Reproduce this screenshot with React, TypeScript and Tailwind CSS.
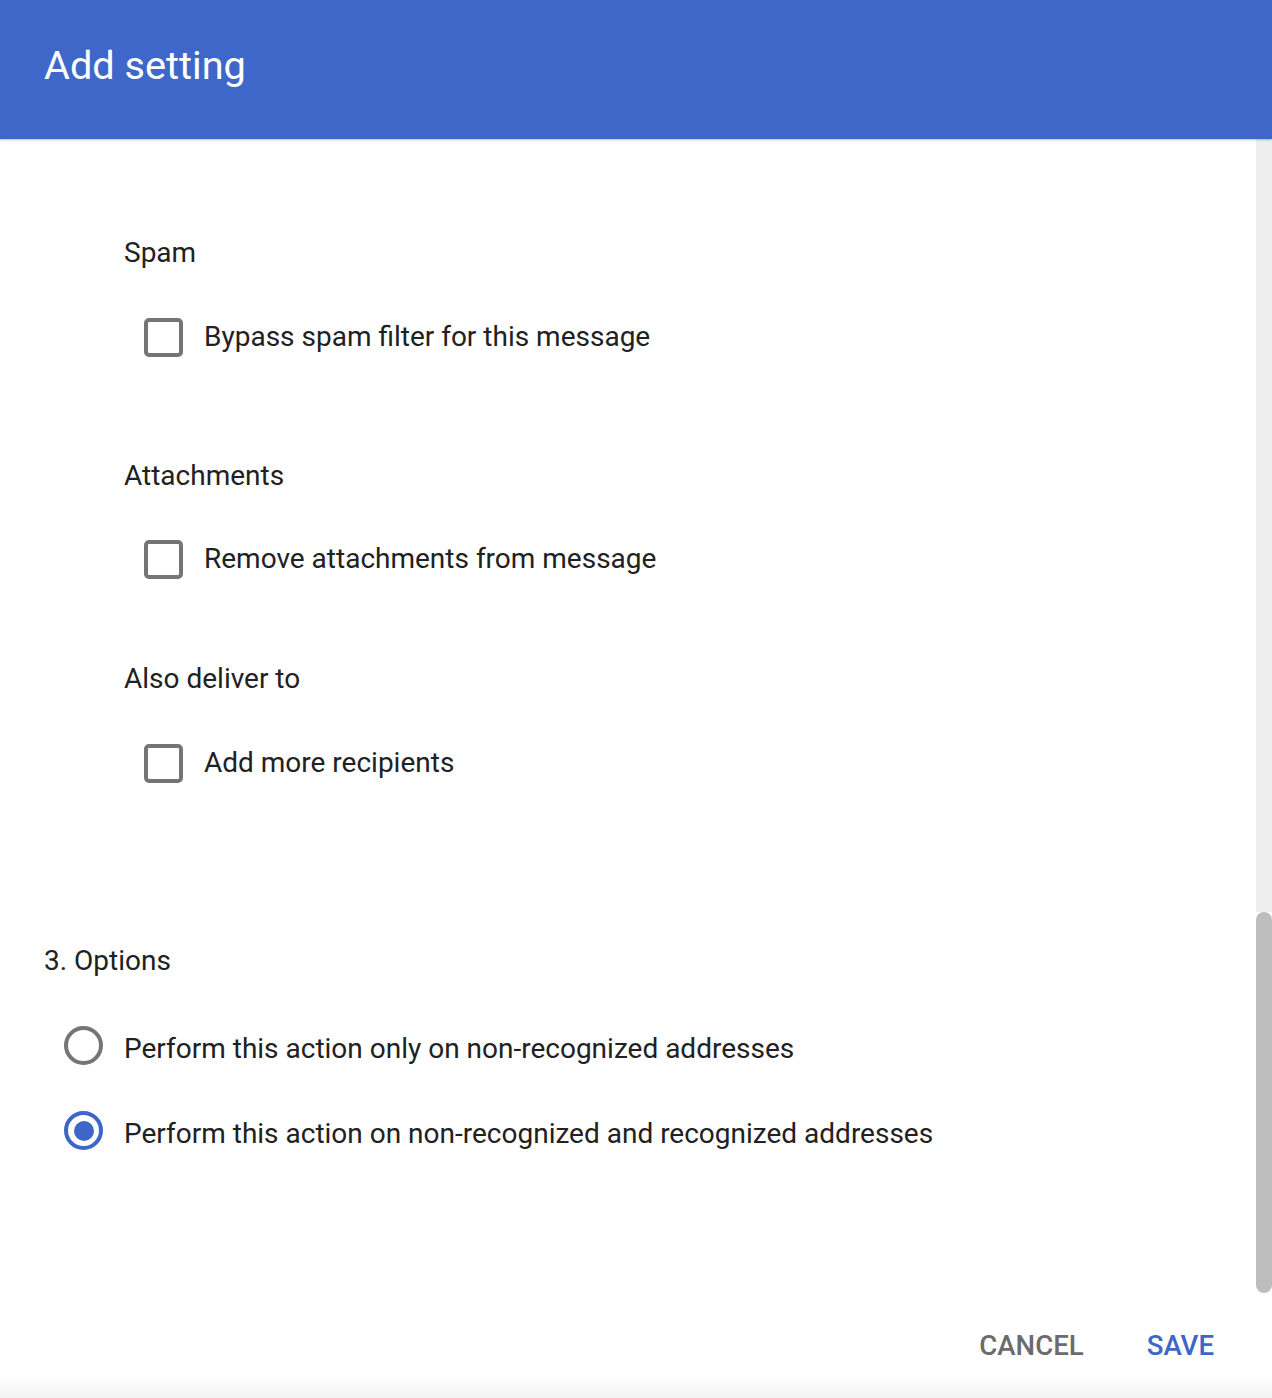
import React from "react";

function Checkbox() {
  return <div className="w-[39px] h-[39px] shrink-0 rounded-[5px] border-[4px] border-[#757575] bg-white" />;
}

function Radio({ checked }: { checked?: boolean }) {
  return checked ? (
    <div className="w-[39px] h-[39px] mb-[7px] shrink-0 rounded-full border-[4px] border-[#3d66c8] flex items-center justify-center">
      <div className="w-[20px] h-[20px] rounded-full bg-[#3d66c8]" />
    </div>
  ) : (
    <div className="w-[39px] h-[39px] mb-[7px] shrink-0 rounded-full border-[4px] border-[#757575]" />
  );
}

function Row({ className, children }: { className?: string; children: React.ReactNode }) {
  return <div className={"h-[40px] flex items-center " + (className ?? "")}>{children}</div>;
}

export default function App() {
  return (
    <div
      className="w-[1272px] h-[1398px] flex flex-col bg-white text-[#212121] overflow-hidden"
      style={{ fontFamily: "Roboto, 'Noto Sans', sans-serif" }}
    >
      <header className="h-[139px] shrink-0 bg-[#3f67c9] flex items-center pl-[44px] pb-[7px] shadow-[0_1px_2px_rgba(0,0,0,0.25)] relative z-10">
        <h1 className="text-[39.7px] text-white font-normal leading-none">Add setting</h1>
      </header>

      <div className="flex-1 flex min-h-0">
        <main className="flex-1 pt-[94px] text-[28px] leading-[40px]">
          <div className="pl-[124px]">
            <Row>Spam</Row>
            <Row className="mt-[44px] pl-[20px] gap-[21px]">
              <Checkbox />
              <span>Bypass spam filter for this message</span>
            </Row>
            <Row className="mt-[99px]">Attachments</Row>
            <Row className="mt-[43px] pl-[20px] gap-[21px]">
              <Checkbox />
              <span>Remove attachments from message</span>
            </Row>
            <Row className="mt-[80px]">Also deliver to</Row>
            <Row className="mt-[44px] pl-[20px] gap-[21px]">
              <Checkbox />
              <span>Add more recipients</span>
            </Row>
          </div>
          <div className="pl-[44px]">
            <Row className="mt-[158px]">3. Options</Row>
            <Row className="mt-[48px] pl-[20px] gap-[21px]">
              <Radio />
              <span>Perform this action only on non-recognized addresses</span>
            </Row>
            <Row className="mt-[45px] pl-[20px] gap-[21px]">
              <Radio checked />
              <span>Perform this action on non-recognized and recognized addresses</span>
            </Row>
          </div>
        </main>
        <div className="w-[16px] shrink-0 flex flex-col">
          <div className="flex-1 bg-[#ededed]" />
          <div className="h-[381px] bg-[#bdbdbd] rounded-[8px]" />
        </div>
      </div>

      <footer className="h-[105px] shrink-0 flex items-center justify-end pr-[58px] gap-[63px] bg-[linear-gradient(to_bottom,#ffffff_78%,#f2f2f2)]">
        <span className="text-[27.6px] font-medium text-[#6b6b6b] leading-none">CANCEL</span>
        <span className="text-[27.6px] font-medium text-[#3d66c8] leading-none">SAVE</span>
      </footer>
    </div>
  );
}
